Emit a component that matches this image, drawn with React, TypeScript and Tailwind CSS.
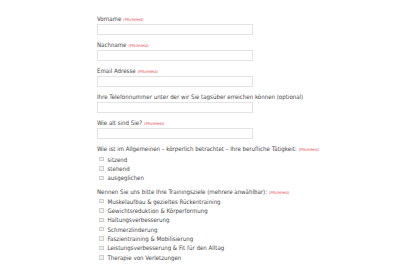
const required = <span className="ml-[2px] text-[3.9px] text-[#e0474c]">(Pflichtfeld)</span>;

const Field = ({ label, req }: { label: string; req?: boolean }) => (
  <div className="mb-[5px]">
    <div className="h-[9px] leading-[9px] whitespace-nowrap">
      {label}
      {req && required}
    </div>
    <div className="mt-[1px] h-[11px] w-[156px] border border-[#e3e3e3] bg-white"></div>
  </div>
);

const Check = ({ label }: { label: string }) => (
  <div className="flex h-[9.35px] items-center whitespace-nowrap">
    <span className="ml-[2px] mr-[4px] inline-block h-[4.5px] w-[4.5px] border border-[#cfcfcf] bg-[#f2f2f2]"></span>
    {label}
  </div>
);

export default function App() {
  const jobs = ['sitzend', 'stehend', 'ausgeglichen'];
  const goals = [
    'Muskelaufbau & gezieltes Rückentraining',
    'Gewichtsreduktion & Körperformung',
    'Haltungsverbesserung',
    'Schmerzlinderung',
    'Faszientraining & Mobilisierung',
    'Leistungsverbesserung & Fit für den Alltag',
    'Therapie von Verletzungen',
  ];

  return (
    <div className="h-[267px] w-[400px] overflow-hidden bg-white pl-[97px] pt-[14px] font-['DejaVu_Sans_Condensed','DejaVu_Sans',sans-serif] text-[6.1px] text-[#484848]">
      <Field label="Vorname" req />
      <Field label="Nachname" req />
      <Field label="Email Adresse" req />
      <Field label="Ihre Telefonnummer unter der wir Sie tagsüber erreichen können (optional)" />
      <Field label="Wie alt sind Sie?" req />

      <div className="h-[9px] leading-[9px] whitespace-nowrap">
        Wie ist im Allgemeinen – körperlich betrachtet – Ihre berufliche Tätigkeit:
        {required}
      </div>
      <div className="mt-[1.5px]">
        {jobs.map((j) => (
          <Check key={j} label={j} />
        ))}
      </div>

      <div className="mt-[4px] h-[9px] leading-[9px] whitespace-nowrap">
        Nennen Sie uns bitte Ihre Trainingsziele (mehrere anwählbar):
        {required}
      </div>
      <div className="mt-[1px]">
        {goals.map((g) => (
          <Check key={g} label={g} />
        ))}
      </div>
    </div>
  );
}
